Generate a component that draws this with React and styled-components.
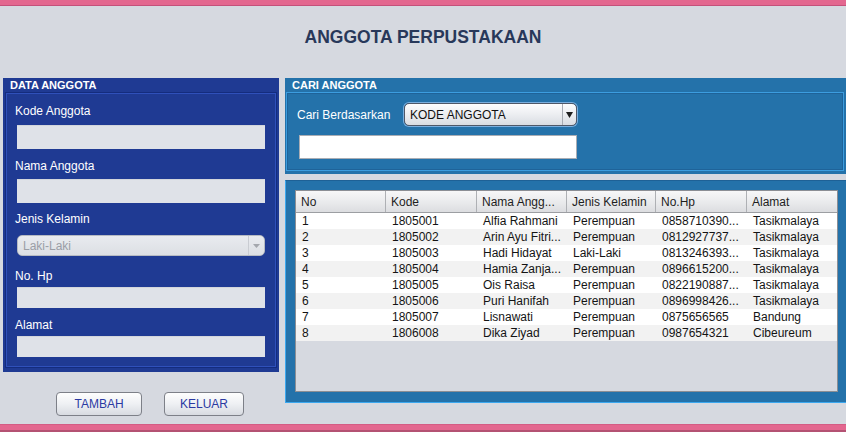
import React from 'react';
import styled, { createGlobalStyle } from 'styled-components';

const Global = createGlobalStyle`
  html, body { margin: 0; padding: 0; background: #d6d9e0; }
  body { font-family: "Liberation Sans", Arial, sans-serif; }
  * { box-sizing: border-box; }
`;

const Frame = styled.div`
  width: 846px;
  height: 432px;
  display: flex;
  flex-direction: column;
  overflow: hidden;
  background: #d6d9e0;
`;

const TopBar = styled.div`
  flex: none;
  height: 6px;
  background: #e3678f;
  border-bottom: 1px solid #c4517a;
`;

const BottomBar = styled.div`
  flex: none;
  height: 8px;
  background: #e3678f;
  border-top: 1px solid #d45c84;
  border-bottom: 2px solid #b45273;
`;

const Header = styled.div`
  flex: none;
  height: 72px;
  padding-top: 21px;
  text-align: center;
`;

const Title = styled.h1`
  margin: 0;
  font-size: 17.5px;
  line-height: 20px;
  font-weight: bold;
  color: #28385a;
`;

const Main = styled.div`
  flex: 1;
  min-height: 0;
  display: flex;
  padding-left: 3px;
  gap: 6px;
`;

const LeftCol = styled.div`
  width: 276px;
  flex: none;
  display: flex;
  flex-direction: column;
`;

const RightCol = styled.div`
  flex: 1;
  display: flex;
  flex-direction: column;
  gap: 6px;
`;

const Panel = styled.div`
  height: ${p => p.$h}px;
  flex: none;
  background: ${p => p.$bg};
  display: flex;
  flex-direction: column;
`;

const PanelTitle = styled.div`
  height: 14px;
  line-height: 14px;
  font-size: 11px;
  font-weight: bold;
  color: #ffffff;
  padding-left: 7px;
`;

const PanelBody = styled.div`
  flex: 1;
  margin: 0 ${p => p.$mr}px ${p => p.$mb}px ${p => p.$ml}px;
  border: 1px solid ${p => p.$line};
  box-shadow: inset 0 0 0 1px ${p => p.$shade};
  display: flex;
  flex-direction: column;
`;

const FieldLabel = styled.div`
  margin-top: ${p => p.$mt}px;
  padding-left: 9px;
  height: 15px;
  line-height: 15px;
  font-size: 12px;
  color: #ffffff;
`;

const TextInput = styled.div`
  margin-top: ${p => p.$mt}px;
  margin-left: 11px;
  width: 248px;
  height: ${p => p.$h}px;
  background: #dfe2e8;
  border-top: 1px solid #d2d5db;
`;

const ComboBox = styled.div`
  margin-top: ${p => p.$mt}px;
  margin-left: ${p => p.$ml}px;
  width: ${p => p.$w}px;
  height: ${p => p.$h}px;
  border-radius: 5px;
  display: flex;
  align-items: stretch;
  font-size: 12px;
  ${p => p.$disabled ? `
    border: 1px solid #b6bac2;
    background: linear-gradient(#e9ebef, #dcdfe4);
    color: #9a9ea6;
  ` : `
    border: 1px solid #4f5868;
    background: linear-gradient(#fdfdfe, #eceef1 50%, #d9dce2);
    color: #111111;
    box-shadow: 0 0 0 1px #7aaede;
  `}
`;

const ComboText = styled.div`
  flex: 1;
  padding-left: 5px;
  display: flex;
  align-items: center;
`;

const ComboArrow = styled.div`
  width: ${p => p.$w}px;
  flex: none;
  display: flex;
  align-items: center;
  justify-content: center;
  border-left: 1px solid ${p => p.$sep};
`;

const SearchRow = styled.div`
  margin-top: 10px;
  padding-left: 10px;
  display: flex;
  align-items: center;
`;

const SearchLabel = styled.div`
  width: 107px;
  padding-top: 1px;
  font-size: 12px;
  color: #ffffff;
`;

const SearchInput = styled.div`
  margin-top: 9px;
  margin-left: 12px;
  width: 278px;
  height: 24px;
  background: #ffffff;
  border: 1px solid #a9adb4;
`;

const TablePanel = styled.div`
  height: 223px;
  flex: none;
  background: #2472aa;
  border-left: 1px solid #3ba8ef;
  border-bottom: 1px solid #3ba8ef;
  border-top: 1px solid #1e6196;
  padding: 9px 8px 10px 9px;
  display: flex;
`;

const ScrollPane = styled.div`
  flex: 1;
  border: 1px solid #8b8e94;
  background: #d6d9e0;
  display: flex;
  flex-direction: column;
`;

const cols = '90px 91px 90px 89px 91px 1fr';

const HeadRow = styled.div`
  display: grid;
  grid-template-columns: ${cols};
  height: 22px;
  background: linear-gradient(#f7f7f8, #e9eaec 55%, #dcdde0);
  border-bottom: 1px solid #9c9ea2;
`;

const HeadCell = styled.div`
  padding: 1px 0 0 5px;
  line-height: 20px;
  font-size: 12px;
  color: #1e1e1e;
  border-right: ${p => (p.$last ? 'none' : '1px solid #aeb0b4')};
  white-space: nowrap;
  overflow: hidden;
`;

const Row = styled.div`
  display: grid;
  grid-template-columns: ${cols};
  height: 16px;
  background: ${p => (p.$alt ? '#f2f2f2' : '#ffffff')};
`;

const Cell = styled.div`
  padding: 1px 0 0 6px;
  line-height: 15px;
  font-size: 12px;
  color: #141414;
  white-space: nowrap;
  overflow: hidden;
`;

const ButtonRow = styled.div`
  margin-top: 20px;
  padding-left: 53px;
  display: flex;
  gap: 22px;
`;

const Button = styled.button`
  width: ${p => p.$w}px;
  height: 24px;
  padding: 0;
  border: 1px solid #7d8088;
  border-radius: 4px;
  background: linear-gradient(#fefefe, #eef0f3 50%, #d8dbe1);
  color: #2b3aa2;
  font-family: "Liberation Sans", Arial, sans-serif;
  font-size: 12px;
`;

const Arrow = ({ color, w = 7, h = 4 }) => (
  <svg width={w} height={h} viewBox={`0 0 ${w} ${h}`}>
    <polygon points={`0,0 ${w},0 ${w / 2},${h}`} fill={color} />
  </svg>
);

const headers = ['No', 'Kode', 'Nama Angg...', 'Jenis Kelamin', 'No.Hp', 'Alamat'];

const rows = [
  ['1', '1805001', 'Alfia Rahmani', 'Perempuan', '0858710390...', 'Tasikmalaya'],
  ['2', '1805002', 'Arin Ayu Fitri...', 'Perempuan', '0812927737...', 'Tasikmalaya'],
  ['3', '1805003', 'Hadi Hidayat', 'Laki-Laki', '0813246393...', 'Tasikmalaya'],
  ['4', '1805004', 'Hamia Zanja...', 'Perempuan', '0896615200...', 'Tasikmalaya'],
  ['5', '1805005', 'Ois Raisa', 'Perempuan', '0822190887...', 'Tasikmalaya'],
  ['6', '1805006', 'Puri Hanifah', 'Perempuan', '0896998426...', 'Tasikmalaya'],
  ['7', '1805007', 'Lisnawati', 'Perempuan', '0875656565', 'Bandung'],
  ['8', '1806008', 'Dika Ziyad', 'Perempuan', '0987654321', 'Cibeureum'],
];

export default function App() {
  return (
    <Frame>
      <Global />
      <TopBar />
      <Header>
        <Title>ANGGOTA PERPUSTAKAAN</Title>
      </Header>
      <Main>
        <LeftCol>
          <Panel $h={294} $bg="#1f3a93">
            <PanelTitle>DATA ANGGOTA</PanelTitle>
            <PanelBody $ml={2} $mr={2} $mb={4} $line="#142c7e" $shade="#2f50ba">
              <FieldLabel $mt={11}>Kode Anggota</FieldLabel>
              <TextInput $mt={6} $h={24} />
              <FieldLabel $mt={10}>Nama Anggota</FieldLabel>
              <TextInput $mt={5} $h={24} />
              <FieldLabel $mt={9}>Jenis Kelamin</FieldLabel>
              <ComboBox $mt={8} $ml={11} $w={248} $h={21} $disabled>
                <ComboText>Laki-Laki</ComboText>
                <ComboArrow $w={16} $sep="#c9ccd2">
                  <Arrow color="#a4a7ad" w={7} h={4} />
                </ComboArrow>
              </ComboBox>
              <FieldLabel $mt={13}>No. Hp</FieldLabel>
              <TextInput $mt={3} $h={21} />
              <FieldLabel $mt={10}>Alamat</FieldLabel>
              <TextInput $mt={3} $h={21} />
            </PanelBody>
          </Panel>
          <ButtonRow>
            <Button $w={86}>TAMBAH</Button>
            <Button $w={80}>KELUAR</Button>
          </ButtonRow>
        </LeftCol>
        <RightCol>
          <Panel $h={96} $bg="#2472aa">
            <PanelTitle>CARI ANGGOTA</PanelTitle>
            <PanelBody $ml={1} $mr={2} $mb={3} $line="#3c9ddf" $shade="#1f6399">
              <SearchRow>
                <SearchLabel>Cari Berdasarkan</SearchLabel>
                <ComboBox $mt={0} $ml={0} $w={173} $h={23}>
                  <ComboText>KODE ANGGOTA</ComboText>
                  <ComboArrow $w={14} $sep="#a7abb3">
                    <Arrow color="#1e1e1e" w={7} h={6} />
                  </ComboArrow>
                </ComboBox>
              </SearchRow>
              <SearchInput />
            </PanelBody>
          </Panel>
          <TablePanel>
            <ScrollPane>
              <HeadRow>
                {headers.map((h, i) => (
                  <HeadCell key={h} $last={i === headers.length - 1}>{h}</HeadCell>
                ))}
              </HeadRow>
              {rows.map((r, i) => (
                <Row key={r[0]} $alt={i % 2 === 1}>
                  {r.map((c, j) => (
                    <Cell key={j}>{c}</Cell>
                  ))}
                </Row>
              ))}
            </ScrollPane>
          </TablePanel>
        </RightCol>
      </Main>
      <BottomBar />
    </Frame>
  );
}
